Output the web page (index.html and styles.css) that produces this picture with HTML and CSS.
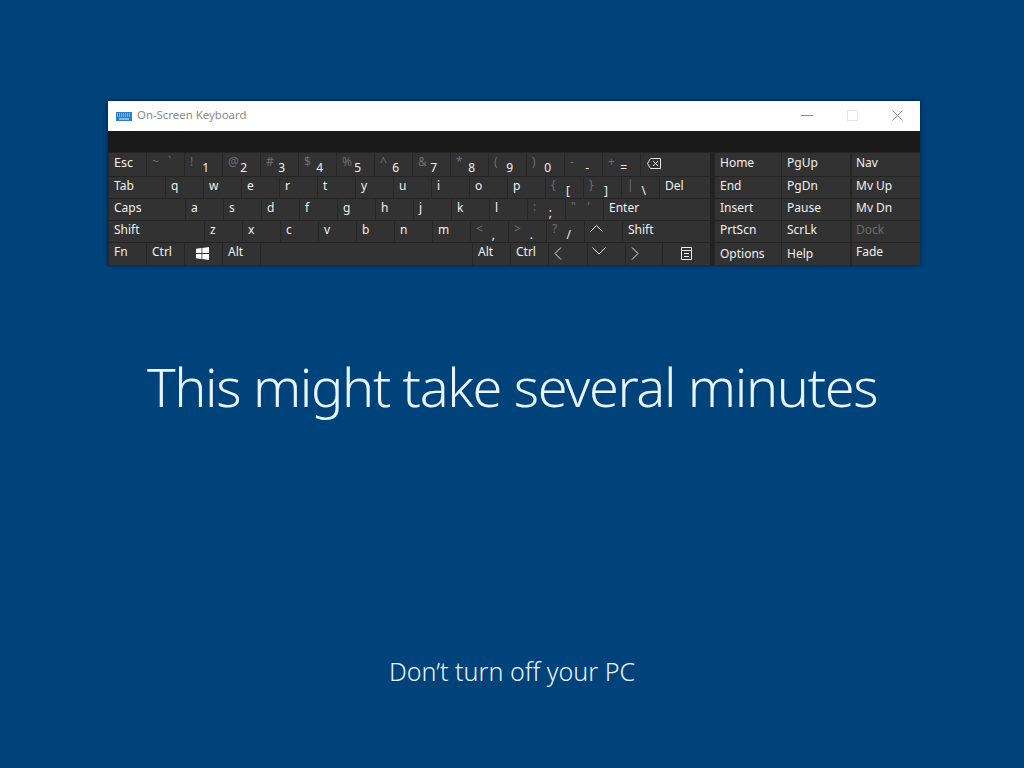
FILE: index.html
```html
<!DOCTYPE html>
<html lang="en">
<head>
  <meta charset="UTF-8">
  <title>This might take several minutes</title>
  <link rel="stylesheet" href="styles.css">
</head>
<body>
  <div class="osk">
    <div class="titlebar">
      <svg class="osk-icon" width="16" height="9" viewBox="0 0 16 9">
        <rect width="16" height="9" fill="#2f7fc4"/>
        <path d="M1 2h14M1 4h14" stroke="#bfe0fa" stroke-dasharray="1 1"/>
        <path d="M3 7h10" stroke="#dff0fd"/>
      </svg>
      <span class="title">On-Screen Keyboard</span>
      <div class="win-btns">
        <svg width="12" height="11" viewBox="0 0 12 11"><path d="M0 5.500h12" stroke="#8c8c8c"/></svg>
        <svg width="11" height="11" viewBox="0 0 11 11"><rect x=".5" y=".5" width="10" height="10" fill="none" stroke="#e6e6e6"/></svg>
        <svg width="11" height="11" viewBox="0 0 11 11"><path d="M.5.500l10 10M10.500.500l-10 10" stroke="#8c8c8c"/></svg>
      </div>
    </div>
    <div class="strip"></div>
    <div class="keys">
      <div class="main">
        <div class="row">
          <div class="key w38 big">Esc</div>
          <div class="key w38 dual"><span class="alt">~</span><span class="alt">`</span></div>
          <div class="key w38 dual"><span class="alt">!</span><span class="low">1</span></div>
          <div class="key w38 dual"><span class="alt">@</span><span class="low">2</span></div>
          <div class="key w38 dual"><span class="alt">#</span><span class="low">3</span></div>
          <div class="key w38 dual"><span class="alt">$</span><span class="low">4</span></div>
          <div class="key w38 dual"><span class="alt">%</span><span class="low">5</span></div>
          <div class="key w38 dual"><span class="alt">^</span><span class="low">6</span></div>
          <div class="key w38 dual"><span class="alt">&amp;</span><span class="low">7</span></div>
          <div class="key w38 dual"><span class="alt">*</span><span class="low">8</span></div>
          <div class="key w38 dual"><span class="alt">(</span><span class="low">9</span></div>
          <div class="key w38 dual"><span class="alt">)</span><span class="low">0</span></div>
          <div class="key w38 dual"><span class="alt">-</span><span class="low">-</span></div>
          <div class="key w38 dual"><span class="alt">+</span><span class="low">=</span></div>
          <div class="key grow bksp">
            <svg width="14" height="11" viewBox="0 0 14 11"><path d="M3.500.5h10v10h-10L.5 5.500zM6 3l5 5M11 3l-5 5" fill="none" stroke="#e8e8e8"/></svg>
          </div>
        </div>
        <div class="row">
          <div class="key w57">Tab</div>
          <div class="key w38">q</div>
          <div class="key w38">w</div>
          <div class="key w38">e</div>
          <div class="key w38">r</div>
          <div class="key w38">t</div>
          <div class="key w38">y</div>
          <div class="key w38">u</div>
          <div class="key w38">i</div>
          <div class="key w38">o</div>
          <div class="key w38">p</div>
          <div class="key w38 dual"><span class="alt">{</span><span class="low">[</span></div>
          <div class="key w38 dual"><span class="alt">}</span><span class="low">]</span></div>
          <div class="key w38 dual"><span class="alt">|</span><span class="low">\</span></div>
          <div class="key grow">Del</div>
        </div>
        <div class="row">
          <div class="key w77">Caps</div>
          <div class="key w38">a</div>
          <div class="key w38">s</div>
          <div class="key w38">d</div>
          <div class="key w38">f</div>
          <div class="key w38">g</div>
          <div class="key w38">h</div>
          <div class="key w38">j</div>
          <div class="key w38">k</div>
          <div class="key w38">l</div>
          <div class="key w38 dual"><span class="alt">:</span><span class="low">;</span></div>
          <div class="key w38 dual"><span class="alt">"</span><span class="alt">'</span></div>
          <div class="key grow">Enter</div>
        </div>
        <div class="row">
          <div class="key w96">Shift</div>
          <div class="key w38">z</div>
          <div class="key w38">x</div>
          <div class="key w38">c</div>
          <div class="key w38">v</div>
          <div class="key w38">b</div>
          <div class="key w38">n</div>
          <div class="key w38">m</div>
          <div class="key w38 dual"><span class="alt">&lt;</span><span class="low">,</span></div>
          <div class="key w38 dual"><span class="alt">&gt;</span><span class="low">.</span></div>
          <div class="key w38 dual"><span class="alt">?</span><span class="low">/</span></div>
          <div class="key w38 high-icon">
            <svg width="13" height="8" viewBox="0 0 13 8"><path d="M.5 7.500l6-6 6 6" fill="none" stroke="#e8e8e8"/></svg>
          </div>
          <div class="key grow">Shift</div>
        </div>
        <div class="row">
          <div class="key w38">Fn</div>
          <div class="key w38">Ctrl</div>
          <div class="key w38 icon-key">
            <svg class="win-logo" width="13" height="13" viewBox="0 0 13 13"><path d="M0 1.800l5.500-.8v5H0zM6.300.9L13 0v6H6.300zM0 6.900h5.500v5L0 11.200zM6.300 6.900H13V13l-6.700-.9z" fill="#fff"/></svg>
          </div>
          <div class="key w38">Alt</div>
          <div class="key w212"></div>
          <div class="key w38">Alt</div>
          <div class="key w38">Ctrl</div>
          <div class="key w39 icon-key">
            <svg width="8" height="13" viewBox="0 0 8 13"><path d="M7 .5l-6 6 6 6" fill="none" stroke="#e8e8e8"/></svg>
          </div>
          <div class="key w38 high-icon">
            <svg class="down" width="14" height="8" viewBox="0 0 14 8"><path d="M.5.5L7 7 13.500.5" fill="none" stroke="#e8e8e8"/></svg>
          </div>
          <div class="key w37 icon-key">
            <svg width="8" height="13" viewBox="0 0 8 13"><path d="M1 .5l6 6-6 6" fill="none" stroke="#e8e8e8"/></svg>
          </div>
          <div class="key grow icon-key menu-key">
            <svg width="11" height="13" viewBox="0 0 11 13"><path d="M.5 3.500h10v9H.5zM.5.500h10v3H.5zM3 6.500h5M3 9.500h5" fill="none" stroke="#eee"/></svg>
          </div>
        </div>
      </div>
      <div class="nav">
        <div class="key">Home</div><div class="key">PgUp</div><div class="key side">Nav</div>
        <div class="key">End</div><div class="key">PgDn</div><div class="key side">Mv Up</div>
        <div class="key">Insert</div><div class="key">Pause</div><div class="key side">Mv Dn</div>
        <div class="key">PrtScn</div><div class="key">ScrLk</div><div class="key side off">Dock</div>
        <div class="key icon-key">Options</div><div class="key icon-key">Help</div><div class="key side">Fade</div>
      </div>
    </div>
  </div>

  <h1>This might take several minutes</h1>
  <p class="note">Don’t turn off your PC</p>
</body>
</html>
```

FILE: styles.css
```css
body {
  margin: 0;
  height: 768px;
  overflow: hidden;
  padding-top: 101px;
  box-sizing: border-box;
  background: #00427a;
  color: #e8f4ff;
  font-family: 'Noto Sans', sans-serif;
}

.osk {
  width: 812px;
  margin-left: 108px;
  box-shadow: 0 0 4px rgba(0, 20, 50, 0.8);
}

.titlebar {
  height: 30px;
  background: #fff;
  display: flex;
  align-items: center;
  padding-left: 8px;
}

.osk-icon {
  margin-right: 5px;
}

.title {
  font-size: 11.400px;
  color: #8a8a8a;
  padding-bottom: 3px;
}

.win-btns {
  margin-left: auto;
  display: flex;
  gap: 34px;
  padding-right: 17px;
  padding-bottom: 2px;
}

.strip {
  height: 21px;
  background: #1a1a1a;
}

.keys {
  display: flex;
  background: #222;
  color: #f0f0f0;
  font-size: 12px;
}

.main {
  width: 602px;
  margin-right: 4px;
  display: grid;
  grid-template-rows: 24px 22px 22px 22px 23px;
}

.row {
  display: flex;
}

.nav {
  flex: 1;
  display: grid;
  grid-template-columns: 67px 69px 70px;
  grid-template-rows: 24px 22px 22px 22px 23px;
}

.key {
  box-sizing: border-box;
  display: flex;
  align-items: center;
  padding-left: 5px;
  padding-bottom: 5px;
  background: #323232;
  border-left: 1px solid #262626;
  border-top: 1px solid #242424;
  white-space: nowrap;
}

.big {
  font-size: 12.500px;
}

.w37 { width: 37px; }
.w38 { width: 38px; }
.w39 { width: 39px; }
.w57 { width: 57px; }
.w77 { width: 77px; }
.w96 { width: 96px; }
.w212 { width: 212px; }
.grow { flex: 1; }

.dual {
  justify-content: space-between;
  padding-right: 13px;
}

.alt {
  color: #6e6e6e;
  position: relative;
  top: -1px;
}

.low {
  position: relative;
  top: 5px;
}

.bksp {
  padding-left: 6px;
  padding-bottom: 3px;
}

.high-icon {
  padding-bottom: 7px;
}

.icon-key {
  padding-bottom: 2px;
}

.win-logo {
  margin-left: 6px;
}

.down {
  margin-left: 0;
  margin-left: -1px;
}

.menu-key {
  justify-content: center;
  padding-left: 0;
}

.side {
  border-left-width: 2px;
  padding-left: 4px;
}

.off {
  color: #6c6c6c;
}

h1 {
  margin: 81px 0 0;
  text-align: center;
  font-size: 54px;
  line-height: 80px;
  font-weight: 300;
  letter-spacing: -1.350px;
  color: #e8f4ff;
}

.note {
  margin: 225px 0 0;
  text-align: center;
  font-size: 25.100px;
  line-height: 40px;
  font-weight: 300;
}
```
